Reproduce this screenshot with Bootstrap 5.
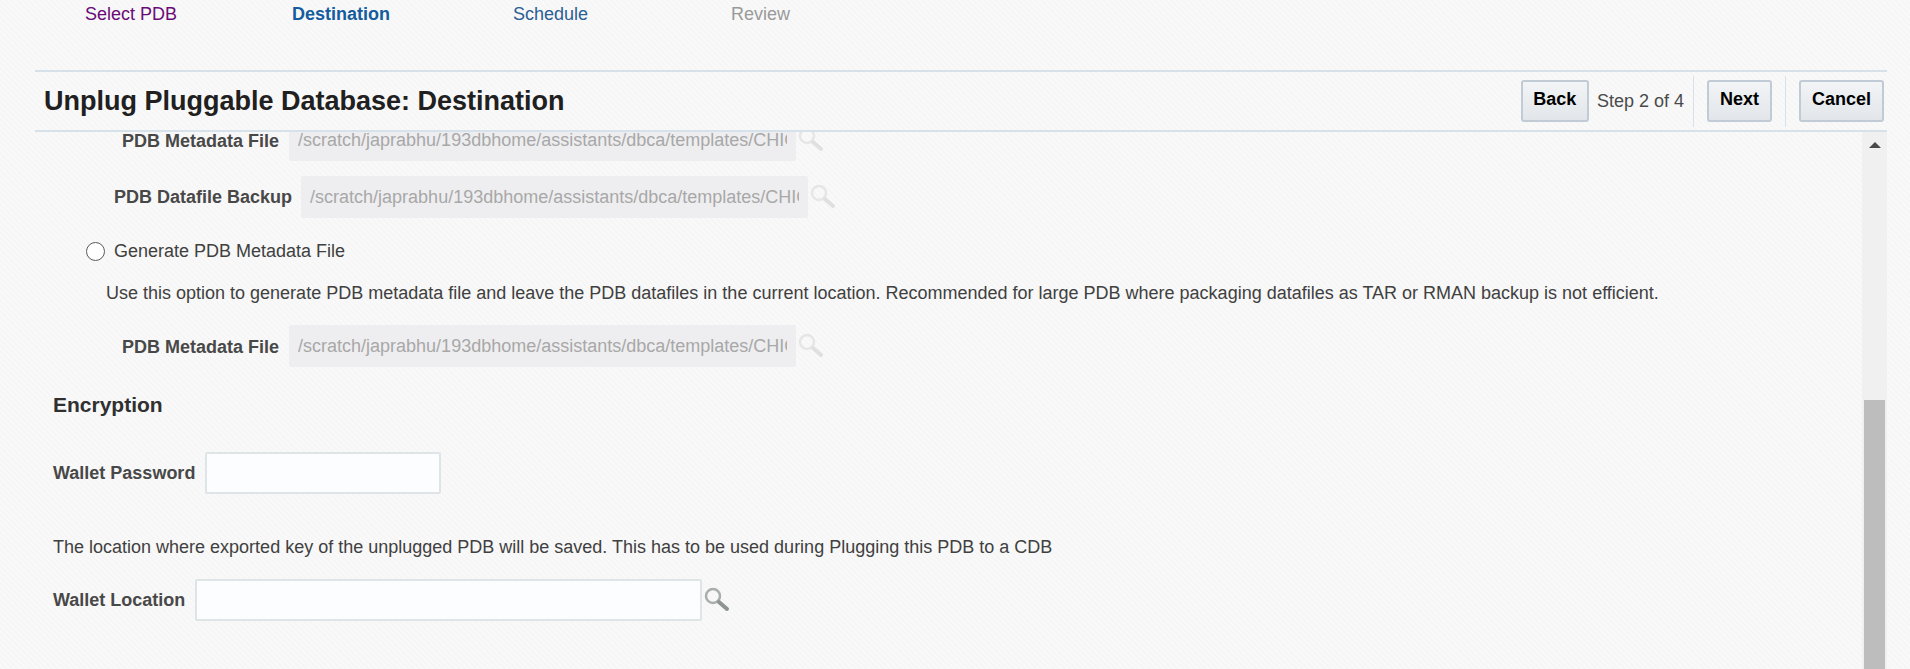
<!DOCTYPE html>
<html lang="en">
<head>
<meta charset="UTF-8">
<title>Unplug Pluggable Database: Destination</title>
<link rel="stylesheet" href="https://cdn.jsdelivr.net/npm/bootstrap@5.3.0/dist/css/bootstrap.min.css">
<style>
    html, body { height: 100%; }
    body {
        height: 669px;
        overflow: hidden;
        font-family: "Liberation Sans", Arial, sans-serif;
        font-size: 18px;
        color: #404040;
        background: repeating-linear-gradient(45deg, #f6f6f6 0, #f6f6f6 2px, #f9f9f9 2px, #f9f9f9 4px);
    }
    .train { height: 70px; padding-top: 4px; line-height: 20px; font-size: 18px; }
    .st-visited { color: #6a0a78; margin-left: 85px; width: 207px; }
    .st-current { color: #145c9e; font-weight: 700; width: 221px; }
    .st-next { color: #2c5e94; width: 218px; }
    .st-off { color: #9a9a9a; }
    .page-head {
        margin: 0 23px 0 35px;
        height: 62px;
        border-top: 2px solid #d6e1ea;
        border-bottom: 2px solid #d6e1ea;
    }
    .page-title { font-size: 27px; font-weight: 700; color: #202020; margin: 0 0 0 9px; line-height: 30px; }
    .tool-btn {
        height: 42px;
        padding: 0 11px 5px;
        font-size: 18px;
        font-weight: 700;
        line-height: 1;
        color: #000;
        background: linear-gradient(#f2f4f6, #e2e6ea);
        border: 2px solid #c0cbd6;
        border-radius: 3px;
    }
    .tool-back { padding: 0 10.5px 5px; }
    .step-note { font-size: 18px; color: #4a4a4a; margin: 0 9px 0 8px; }
    .tool-sep { width: 1px; height: 51px; background: #d6e1ea; }
    .tool-gap { margin-left: 13px; }
    .tool-end { margin-right: 3px; }
    .pane { margin-right: 23px; height: 537px; overflow: hidden; }
    .pane-body { min-width: 0; }
    .scroll-track { width: 25px; background: #f0f0f0; padding: 0 2px; }
    .scroll-arrow { width: 0; height: 0; margin: 10px auto 0; border: 6px solid transparent; border-top: 0; border-bottom: 6px solid #4a4a4a; }
    .scroll-thumb { height: 280px; margin-top: 252px; background: #bdbdbd; }
    .field-row { align-items: center; }
    .field-label { font-size: 18px; line-height: 1; font-weight: 700; color: #484848; white-space: nowrap; }
    .field-input {
        display: block;
        height: 42px;
        padding: 0 7px;
        font-size: 18px;
        font-family: inherit;
        border: 2px solid #dfe4e6;
        border-radius: 2px;
        background: #fcfdfe;
    }
    .field-input:disabled { color: #a8a8a8; background: #eeeef0; border-color: #eeeef0; }
    .w-file { width: 507px; }
    .w-pass { width: 236px; margin-left: 10px; }
    .w-loc { width: 507px; margin-left: 10px; }
    .look-btn { width: 26px; height: 26px; flex: none; margin-left: 2px; }
    .look-off circle { stroke: #e6e6e6; }
    .look-off path { stroke: #e0e0e0; }
    .look-on circle { stroke: #a9adad; }
    .look-on path { stroke: #8e9494; }
    .row-meta-top { margin: -13px 0 0 122px; }
    .row-backup { margin: 15px 0 0 114px; }
    .row-meta { margin: 0 0 0 122px; }
    .row-meta .field-input, .row-meta-top .field-input { margin-left: 10px; }
    .row-meta .field-label, .row-meta-top .field-label { padding-top: 2px; }
    .row-backup .field-input { margin-left: 9px; }
    .radio-row { margin: 24px 0 0 86px; height: 19px; font-size: 18px; }
    .radio-dot { width: 19px; height: 19px; margin: 0 9px 0 0; flex: none; appearance: none; background: #fff; border: 1px solid #5a5a5a; border-radius: 50%; }
    .hint-text { margin: 22px 0 22px 106px; font-size: 18px; line-height: 20px; white-space: nowrap; }
    .sec-title { margin: 26px 0 0 53px; font-size: 21px; font-weight: 700; line-height: 24px; color: #303030; }
    .row-pass { margin: 35px 0 0 53px; }
    .key-text { margin: 43px 0 0 53px; font-size: 18px; line-height: 20px; }
    .row-loc { margin: 22px 0 0 53px; }
</style>
</head>
<body>
    <div class="train d-flex">
        <div class="st-visited">Select PDB</div>
        <div class="st-current">Destination</div>
        <div class="st-next">Schedule</div>
        <div class="st-off">Review</div>
    </div>

    <div class="page-head d-flex align-items-center justify-content-between">
        <h1 class="page-title">Unplug Pluggable Database: Destination</h1>
        <div class="d-flex align-items-center">
            <button class="tool-btn tool-back" type="button">Back</button>
            <span class="step-note">Step 2 of 4</span>
            <span class="tool-sep"></span>
            <button class="tool-btn tool-gap" type="button">Next</button>
            <span class="tool-sep tool-gap"></span>
            <button class="tool-btn tool-gap tool-end" type="button">Cancel</button>
        </div>
    </div>

    <div class="pane d-flex">
        <div class="pane-body flex-grow-1">
            <div class="field-row row-meta-top d-flex">
                <label class="field-label">PDB Metadata File</label>
                <input class="field-input w-file" disabled value="/scratch/japrabhu/193dbhome/assistants/dbca/templates/CHICAGO">
                <svg class="look-btn look-off" viewBox="0 0 26 26"><circle cx="9" cy="9" r="7" fill="none" stroke-width="2.5"/><path d="M15 15l8 7" stroke-width="4" stroke-linecap="round"/></svg>
            </div>
            <div class="field-row row-backup d-flex">
                <label class="field-label">PDB Datafile Backup</label>
                <input class="field-input w-file" disabled value="/scratch/japrabhu/193dbhome/assistants/dbca/templates/CHICAGO">
                <svg class="look-btn look-off" viewBox="0 0 26 26"><circle cx="9" cy="9" r="7" fill="none" stroke-width="2.5"/><path d="M15 15l8 7" stroke-width="4" stroke-linecap="round"/></svg>
            </div>
            <div class="radio-row d-flex align-items-center">
                <input class="radio-dot" type="radio" name="mode">
                <span>Generate PDB Metadata File</span>
            </div>
            <p class="hint-text">Use this option to generate PDB metadata file and leave the PDB datafiles in the current location. Recommended for large PDB where packaging datafiles as TAR or RMAN backup is not efficient.</p>
            <div class="field-row row-meta d-flex">
                <label class="field-label">PDB Metadata File</label>
                <input class="field-input w-file" disabled value="/scratch/japrabhu/193dbhome/assistants/dbca/templates/CHICAGO">
                <svg class="look-btn look-off" viewBox="0 0 26 26"><circle cx="9" cy="9" r="7" fill="none" stroke-width="2.5"/><path d="M15 15l8 7" stroke-width="4" stroke-linecap="round"/></svg>
            </div>
            <h2 class="sec-title">Encryption</h2>
            <div class="field-row row-pass d-flex">
                <label class="field-label">Wallet Password</label>
                <input class="field-input w-pass" type="password">
            </div>
            <p class="key-text">The location where exported key of the unplugged PDB will be saved. This has to be used during Plugging this PDB to a CDB</p>
            <div class="field-row row-loc d-flex">
                <label class="field-label">Wallet Location</label>
                <input class="field-input w-loc" type="text">
                <svg class="look-btn look-on" viewBox="0 0 26 26"><circle cx="9" cy="9" r="7" fill="none" stroke-width="2.5"/><path d="M15 15l8 7" stroke-width="4" stroke-linecap="round"/></svg>
            </div>
        </div>
        <div class="scroll-track flex-shrink-0">
            <div class="scroll-arrow"></div>
            <div class="scroll-thumb"></div>
        </div>
    </div>
</body>
</html>
